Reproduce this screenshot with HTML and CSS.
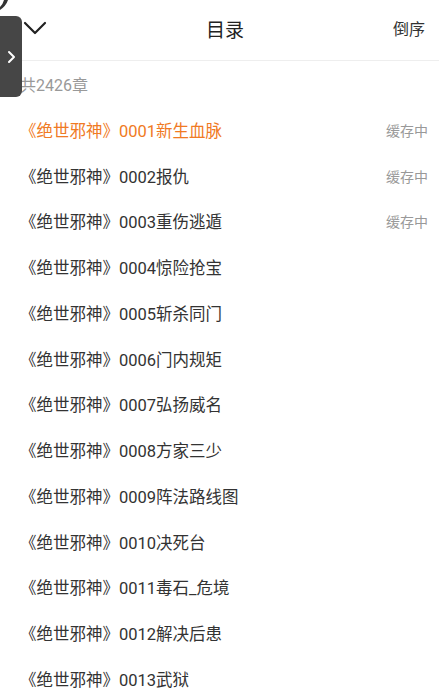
FILE: index.html
```html
<!DOCTYPE html>
<html lang="zh-CN">
<head>
    <meta charset="UTF-8">
    <meta name="viewport" content="width=device-width, initial-scale=1.0">
    <title>目录</title>
    <link rel="stylesheet" href="styles.css">
</head>
<body>
    <svg class="corner" width="12" height="12" viewBox="0 0 12 12">
        <path d="M0 0 H8 Q6 6 0 10 V7 Q3 4 4 0 Z" fill="#333"/>
    </svg>

    <div class="side-tab">
        <svg width="10" height="14" viewBox="0 0 10 14">
            <path d="M3 2 L8 7 L3 12" fill="none" stroke="#fff" stroke-width="2" stroke-linecap="round" stroke-linejoin="round"/>
        </svg>
    </div>

    <div class="header">
        <div class="header-left">
            <svg width="24" height="14" viewBox="0 0 24 14">
                <path d="M2 2 L12 12 L22 2" fill="none" stroke="#222" stroke-width="2.2" stroke-linecap="round" stroke-linejoin="round"/>
            </svg>
        </div>
        <div class="header-title">目录</div>
        <div class="header-right">倒序</div>
    </div>

    <div class="count">共2426章</div>

    <ul class="chapters">
        <li class="active"><span>《绝世邪神》0001新生血脉</span><span class="status">缓存中</span></li>
        <li><span>《绝世邪神》0002报仇</span><span class="status">缓存中</span></li>
        <li><span>《绝世邪神》0003重伤逃遁</span><span class="status">缓存中</span></li>
        <li><span>《绝世邪神》0004惊险抢宝</span></li>
        <li><span>《绝世邪神》0005斩杀同门</span></li>
        <li><span>《绝世邪神》0006门内规矩</span></li>
        <li><span>《绝世邪神》0007弘扬威名</span></li>
        <li><span>《绝世邪神》0008方家三少</span></li>
        <li><span>《绝世邪神》0009阵法路线图</span></li>
        <li><span>《绝世邪神》0010决死台</span></li>
        <li><span>《绝世邪神》0011毒石_危境</span></li>
        <li><span>《绝世邪神》0012解决后患</span></li>
        <li><span>《绝世邪神》0013武狱</span></li>
    </ul>
</body>
</html>
```

FILE: styles.css
```css
body {
    margin: 0;
    font-family: Roboto, "Noto Sans CJK SC", sans-serif;
    background: #fff;
    color: #333;
    overflow: hidden;
}

.corner {
    position: absolute;
    left: 0;
    top: 0;
}

.side-tab {
    position: absolute;
    left: 0;
    top: 16px;
    width: 22px;
    height: 81px;
    background-color: #464646;
    border-radius: 0 6px 6px 0;
    display: flex;
    align-items: center;
    justify-content: center;
}

.header {
    height: 60px;
    display: grid;
    grid-template-columns: 1fr auto 1fr;
    align-items: center;
    border-bottom: 1px solid #eeeeee;
}

.header-left {
    padding-left: 23px;
    display: flex;
    align-items: center;
    padding-bottom: 4px;
}

.header-title {
    font-size: 19px;
    color: #222;
    padding-left: 11px;
    padding-bottom: 4px;
}

.header-right {
    justify-self: end;
    padding-right: 14px;
    padding-bottom: 4px;
    font-size: 16px;
    color: #333;
}

.count {
    height: 47px;
    display: flex;
    align-items: center;
    padding-left: 20px;
    font-size: 16px;
    color: #999;
    margin-top: -1px;
}

.chapters {
    list-style: none;
    margin: 0;
    padding: 0;
}

.chapters li {
    height: 45.75px;
    display: flex;
    align-items: center;
    justify-content: space-between;
    padding: 0 11px 0 20px;
    font-size: 16.5px;
    color: #333;
}

.chapters li.active {
    color: #f07a24;
}

.chapters .status {
    font-size: 14px;
    color: #999;
}
```
